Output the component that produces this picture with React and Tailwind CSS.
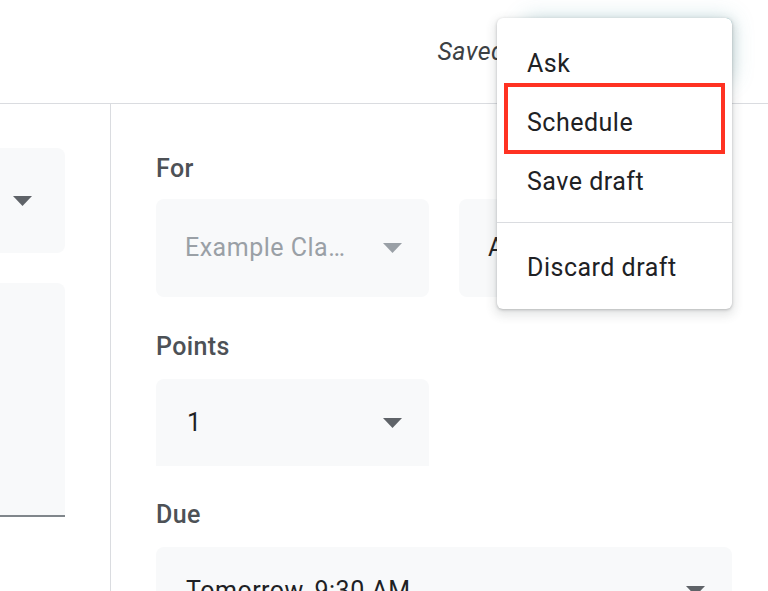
import React from "react";

function Caret({ color = "#5f6368" }) {
  return (
    <svg width="19" height="10" viewBox="0 0 19 10" className="shrink-0">
      <polygon points="0,0 19,0 9.5,10" fill={color} />
    </svg>
  );
}

function Label({ children, className = "" }) {
  return (
    <div className={"h-[32px] leading-[32px] text-[25px] tracking-[0.4px] font-medium text-[#4d5156] " + className}>
      {children}
    </div>
  );
}

export default function App() {
  return (
    <div className="relative w-[768px] h-[591px] overflow-hidden bg-white font-['Roboto','Noto_Sans',sans-serif]">
      {/* Header */}
      <header className="h-[104px] border-b border-[#dadce0] flex items-start justify-end pr-[36px]">
        <span className="self-center mr-[19px] text-[25px] tracking-[0.4px] italic text-[#3c4043] leading-[32px]">Saved</span>
        <div className="mt-[18px] w-[208px] h-[62px] rounded-[6px] bg-[#3f9aa0] border border-[#5aa8ad] shadow-[0_0_22px_rgba(70,150,160,0.28)]" />
      </header>

      {/* Body */}
      <div className="flex h-[487px]">
        {/* Left column */}
        <div className="w-[111px] shrink-0 border-r border-[#dadce0]">
          <div className="mt-[44px] w-[65px] h-[105px] bg-[#f8f9fa] rounded-r-[8px] flex items-center pl-[13px]">
            <Caret />
          </div>
          <div className="mt-[30px] w-[65px] h-[234px] bg-[#f8f9fa] rounded-tr-[8px] border-b-2 border-[#80868b]" />
        </div>

        {/* Right column */}
        <div className="flex-1 pl-[45px] pr-[36px]">
          <Label className="mt-[49px]">For</Label>
          <div className="mt-[14px] flex gap-[30px]">
            <div className="w-[273px] h-[98px] bg-[#f8f9fa] rounded-[8px] flex items-center justify-between pl-[29px] pr-[27px]">
              <span className="text-[25px] tracking-[0.5px] leading-[32px] text-[#9aa0a6]">Example Cla…</span>
              <Caret color="#9aa0a6" />
            </div>
            <div className="w-[273px] h-[98px] bg-[#f8f9fa] rounded-[8px] flex items-center justify-between pl-[29px] pr-[27px]">
              <span className="text-[25px] tracking-[0.5px] leading-[32px] text-[#202124]">All students</span>
              <Caret />
            </div>
          </div>

          <Label className="mt-[34px]">Points</Label>
          <div className="mt-[16px] w-[273px] h-[87px] bg-[#f8f9fa] rounded-t-[8px] flex items-center justify-between pl-[31px] pr-[27px]">
            <span className="text-[25px] tracking-[0.5px] leading-[32px] text-[#202124]">1</span>
            <Caret />
          </div>

          <Label className="mt-[33px]">Due</Label>
          <div className="mt-[16px] h-[88px] bg-[#f8f9fa] rounded-[8px] flex items-center justify-between pl-[30px] pr-[27px]">
            <span className="text-[25px] tracking-[0.5px] leading-[32px] text-[#202124]">Tomorrow, 9:30 AM</span>
            <Caret />
          </div>
        </div>
      </div>

      {/* Dropdown menu */}
      <div className="absolute left-[497px] top-[18px] w-[235px] bg-white rounded-[6px] pt-[16px] pb-[12px] shadow-[0_1px_3px_rgba(60,64,67,0.3),0_4px_10px_3px_rgba(60,64,67,0.12)]">
        <div className="h-[59px] flex items-center pl-[30px] text-[25px] tracking-[0.5px] text-[#202124]">Ask</div>
        <div className="h-[59px] flex items-center pl-[30px] text-[25px] tracking-[0.5px] text-[#202124]">Schedule</div>
        <div className="h-[59px] flex items-center pl-[30px] text-[25px] tracking-[0.5px] text-[#202124]">Save draft</div>
        <div className="mt-[11px] mb-[15px] h-px bg-[#dadce0]" />
        <div className="h-[59px] flex items-center pl-[30px] text-[25px] tracking-[0.5px] text-[#202124]">Discard draft</div>
        <div className="absolute left-[7px] top-[65px] w-[221px] h-[71px] border-4 border-[#ff3222]" />
      </div>
    </div>
  );
}
